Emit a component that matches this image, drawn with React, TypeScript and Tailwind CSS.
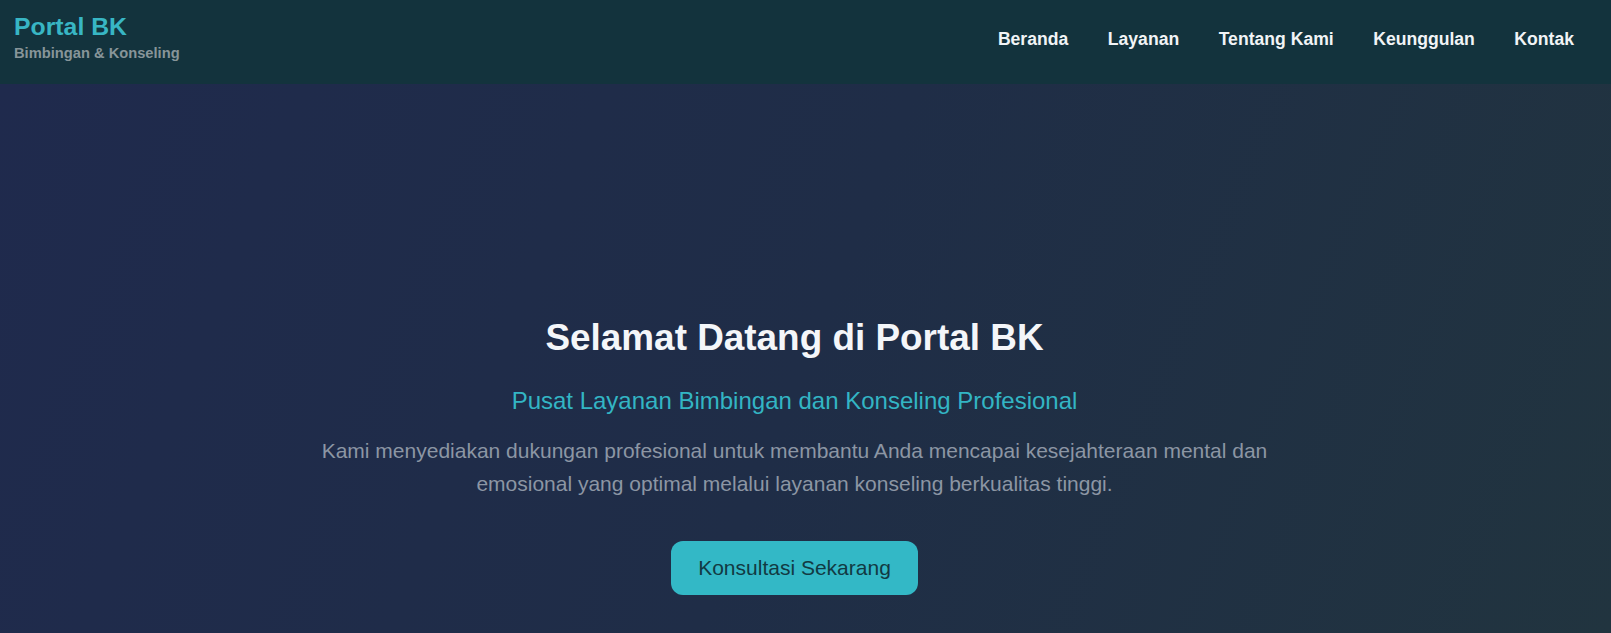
export default function App() {
  const links = ["Beranda", "Layanan", "Tentang Kami", "Keunggulan", "Kontak"];
  return (
    <div className="min-h-screen flex flex-col font-['Liberation_Sans',Arial,sans-serif]">
      {/* top navigation bar */}
      <header className="h-[84px] bg-[#13333d] flex items-start justify-between pl-[14px] pr-[37px] shrink-0">
        <div className="pt-[11.5px] flex flex-col">
          <span className="text-[24.8px] leading-[30px] font-bold text-[#38b6c4]">Portal BK</span>
          <span className="mt-[3.5px] text-[14.7px] leading-[17px] font-semibold text-[#879599]">
            Bimbingan &amp; Konseling
          </span>
        </div>
        <nav className="pt-[28.8px] flex gap-[39.5px]">
          {links.map((l) => (
            <a key={l} href="#" className="text-[17.6px] leading-[20px] font-bold text-[#f1f4f6]">
              {l}
            </a>
          ))}
        </nav>
      </header>

      {/* hero section */}
      <section className="flex-1 bg-[linear-gradient(112deg,#1f2a4d_0%,#1f2d47_50%,#21343f_100%)] pr-[22px]">
        <div className="flex flex-col items-center text-center pt-[232px] pb-[40px]">
          <h1 className="text-[36.9px] leading-[44px] font-bold text-[#f4f6f9]">
            Selamat Datang di Portal BK
          </h1>
          <p className="mt-[26px] text-[24px] leading-[29px] font-medium text-[#33b5c4]">
            Pusat Layanan Bimbingan dan Konseling Profesional
          </p>
          <p className="mt-[20px] max-w-[1000px] text-[21px] leading-[32.5px] text-[#8c96a4]">
            Kami menyediakan dukungan profesional untuk membantu Anda mencapai kesejahteraan mental dan
            emosional yang optimal melalui layanan konseling berkualitas tinggi.
          </p>
          <button className="mt-[41px] h-[54px] w-[247px] rounded-[12px] bg-[#33b8c6] text-[21px] font-medium text-[#123a43]">
            Konsultasi Sekarang
          </button>
        </div>
      </section>
    </div>
  );
}
